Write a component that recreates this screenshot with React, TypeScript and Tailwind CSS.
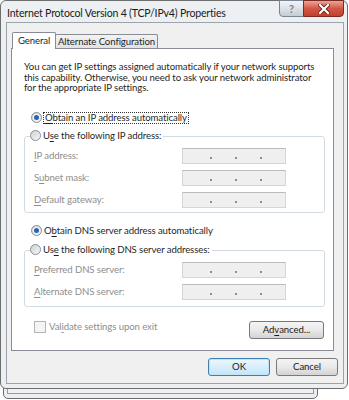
import React from "react";

const U = ({ children }: { children: React.ReactNode }) => (
  <span className="underline decoration-[1px] underline-offset-[2px]">{children}</span>
);

function Radio({ checked }: { checked?: boolean }) {
  return (
    <div className="w-[11px] h-[11px] rounded-full border border-[#8a8e93] bg-linear-to-br from-[#cfd1d3] to-[#f7f7f7] flex items-center justify-center shrink-0">
      {checked && (
        <div className="w-[7px] h-[7px] rounded-full bg-[#eef4fa] flex items-center justify-center">
          <div className="w-[5px] h-[5px] rounded-full bg-[#2a66ad]" />
        </div>
      )}
    </div>
  );
}

function IpField() {
  return (
    <div className="w-[104px] h-[16px] bg-[#efefef] border border-[#d6d6d6] border-t-[#bcbcbc] flex items-start pt-[8px] pl-[27px] gap-[23px]">
      <div className="w-[2px] h-[2px] bg-[#8c8c8c]" />
      <div className="w-[2px] h-[2px] bg-[#8c8c8c]" />
      <div className="w-[2px] h-[2px] bg-[#8c8c8c]" />
    </div>
  );
}

function Row({ label }: { label: React.ReactNode }) {
  return (
    <div className="grid grid-cols-[148px_104px] items-center h-[16px]">
      <span className="text-[#8e8e8e] whitespace-nowrap">{label}</span>
      <IpField />
    </div>
  );
}

function Btn({ children, def, w }: { children: React.ReactNode; def?: boolean; w: string }) {
  return (
    <div
      className={
        def
          ? `${w} h-[18px] rounded-[3px] border border-[#3c7fb1] bg-linear-to-b from-[#edf7fd] to-[#c3e5f8] shadow-[inset_0_0_0_1px_#bfe6f8] flex items-center justify-center text-[#1b1b1b] whitespace-nowrap`
          : `${w} h-[18px] rounded-[3px] border border-[#7a7a7a] bg-linear-to-b from-[#f4f4f4] via-[#e9e9e9] to-[#d3d3d3] flex items-center justify-center text-[#1b1b1b] whitespace-nowrap`
      }
    >
      {children}
    </div>
  );
}

export default function App() {
  return (
    <div className="relative w-[349px] h-[400px] bg-white overflow-hidden font-['Lato','Noto_Sans',sans-serif] text-[9.6px] tracking-[-0.1px] leading-[12px] text-[#1f1f1f]">
      {/* window behind */}
      <div className="absolute left-[3px] top-[340px] w-[315px] h-[59px] rounded-[5px] border border-[#6c6c6c] bg-[#eceef0] flex flex-col justify-end px-[3px] pb-[4px]">
        <div className="h-[20px] border border-[#9a9a9a] bg-[#f0f0f0]" />
      </div>

      {/* main window */}
      <div className="relative w-[348px] h-[389px] rounded-[6px] border border-[#6e6e6e] bg-[#edf0f3] flex flex-col">
        {/* title bar */}
        <div className="h-[21px] flex items-start shrink-0">
          <div className="pl-[6px] pt-[6px] text-[10.6px] tracking-[-0.2px] leading-[14px] text-[#1b1b1b] -mt-[1px] whitespace-nowrap">
            Internet Protocol Version 4 (TCP/IPv4) Properties
          </div>
          <div className="flex-1" />
          <div className="flex -mt-[1px] mr-[3px]">
            <div className="w-[25px] h-[17px] rounded-bl-[4px] border border-[#7a8594] bg-linear-to-b from-[#f3f5f7] via-[#dde1e6] to-[#c6ccd3] flex items-center justify-center text-[11px] leading-[11px] text-[#7b8593] font-bold">
              ?
            </div>
            <div className="w-[41px] h-[17px] rounded-br-[4px] border border-[#7a2a20] -ml-px bg-linear-to-b from-[#e8a597] via-[#d25744] to-[#c2402c] flex items-center justify-center">
              <svg width="12" height="10" viewBox="0 0 12 10">
                <path d="M2 1 L10 9 M10 1 L2 9" stroke="#6b1d14" strokeWidth="4" strokeLinecap="square" />
                <path d="M2 1 L10 9 M10 1 L2 9" stroke="#ffffff" strokeWidth="2.2" strokeLinecap="square" />
              </svg>
            </div>
          </div>
        </div>

        {/* client area */}
        <div className="mx-[5px] w-[338px] h-[362px] border border-[#9da3aa] bg-[#f0f0f0] flex flex-col">
          {/* tabs */}
          <div className="flex items-end pt-[8px] pl-[5px] h-[25px]">
            <div className="relative z-10 w-[44px] h-[17px] -mb-px border border-b-0 border-[#898c95] rounded-t-[2px] bg-white flex items-center justify-center pb-[1px] whitespace-nowrap">
              General
            </div>
            <div className="w-[103px] h-[14px] -ml-px border border-b-0 border-[#898c95] rounded-t-[2px] bg-linear-to-b from-[#f3f3f3] to-[#e2e2e2] flex items-center justify-center whitespace-nowrap">
              Alternate Configuration
            </div>
          </div>

          {/* panel */}
          <div className="ml-[4px] w-[323px] h-[303px] border border-[#898c95] bg-white flex flex-col">
            <p className="pt-[13px] pl-[12px] leading-[10.6px] whitespace-nowrap">
              You can get IP settings assigned automatically if your network supports
              <br />
              this capability. Otherwise, you need to ask your network administrator
              <br />
              for the appropriate IP settings.
            </p>

            <div className="mt-[18px] ml-[19px] h-[12px] flex items-center gap-[1px]">
              <Radio checked />
              <span className="border border-dotted border-[#333] px-[1px] leading-[10px] whitespace-nowrap">
                <U>O</U>btain an IP address automatically
              </span>
            </div>

            {/* group 1 */}
            <div className="mt-[12px] ml-[12px] w-[301px] border border-[#d3dbe2] rounded-[3px] flex flex-col pl-[9px] pb-[4px]">
              <div className="-mt-[7px] -ml-[4px] h-[12px] w-fit bg-white pr-[2px] flex items-center gap-[2px] whitespace-nowrap">
                <Radio />
                <span>
                  U<U>s</U>e the following IP address:
                </span>
              </div>
              <div className="mt-[6px] flex flex-col gap-[6px]">
                <Row label={<><U>I</U>P address:</>} />
                <Row label={<>S<U>u</U>bnet mask:</>} />
                <Row label={<><U>D</U>efault gateway:</>} />
              </div>
            </div>

            <div className="mt-[12px] ml-[19px] h-[12px] flex items-center gap-[2px] whitespace-nowrap">
              <Radio checked />
              <span>
                O<U>b</U>tain DNS server address automatically
              </span>
            </div>

            {/* group 2 */}
            <div className="mt-[13px] ml-[12px] w-[301px] border border-[#d3dbe2] rounded-[3px] flex flex-col pl-[9px] pb-[6px]">
              <div className="-mt-[7px] -ml-[4px] h-[12px] w-fit bg-white pr-[2px] flex items-center gap-[2px] whitespace-nowrap">
                <Radio />
                <span>
                  Us<U>e</U> the following DNS server addresses:
                </span>
              </div>
              <div className="mt-[6px] flex flex-col gap-[6px]">
                <Row label={<><U>P</U>referred DNS server:</>} />
                <Row label={<><U>A</U>lternate DNS server:</>} />
              </div>
            </div>

            <div className="mt-[14px] flex items-start justify-between pr-[9px]">
              <div className="ml-[22px] flex items-center gap-[3px] h-[12px] whitespace-nowrap">
                <div className="w-[12px] h-[12px] border border-[#b3b3b3] bg-[#f4f4f4]" />
                <span className="text-[#8e8e8e]">
                  Val<U>i</U>date settings upon exit
                </span>
              </div>
              <Btn w="w-[75px]">
                Ad<U>v</U>anced...
              </Btn>
            </div>
          </div>

          {/* bottom buttons */}
          <div className="mt-[7px] flex justify-end gap-[6px] pr-[5px]">
            <Btn def w="w-[62px]">
              OK
            </Btn>
            <Btn w="w-[62px]">Cancel</Btn>
          </div>
        </div>
      </div>
    </div>
  );
}
